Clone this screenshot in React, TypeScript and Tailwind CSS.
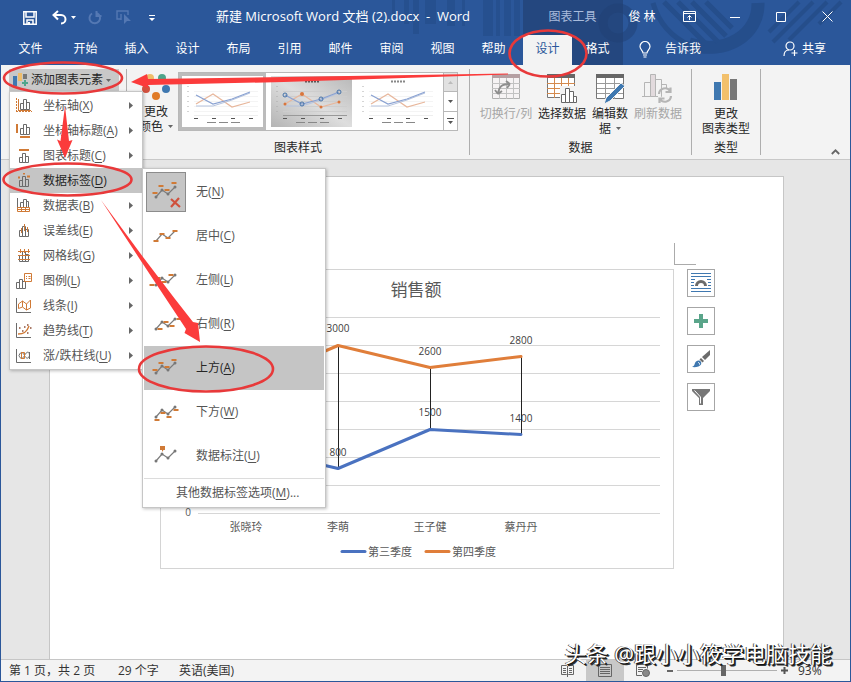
import React from "react";

const ORANGE = "#d07a36";
const GRAY = "#6b6b6b";

/* ---------- title bar ---------- */

function HeaderArt() {
  return (
    <svg className="absolute left-0 top-0 h-full w-[851px]" viewBox="0 0 851 65" aria-hidden="true">
      <g fill="#244c88" opacity="0.6">
        <rect x="391" y="0" width="3" height="14" />
        <rect x="403" y="0" width="5" height="24" />
        <rect x="412" y="0" width="6" height="34" />
        <rect x="424" y="0" width="11" height="24" />
        <rect x="446" y="0" width="8" height="26" />
        <rect x="461" y="0" width="3" height="26" />
        <rect x="482" y="0" width="10" height="36" />
        <rect x="495" y="0" width="4" height="36" />
        <rect x="503" y="0" width="7" height="36" />
        <rect x="513" y="0" width="6" height="36" />
      </g>
      <rect x="522" y="0" width="100" height="65" fill="#24477f" />
      <circle cx="617" cy="23" r="15" fill="none" stroke="#1f3f73" strokeWidth="9" opacity="0.5" />
      <g fill="none" stroke="#244c88" opacity="0.8">
        <path d="M688 44C725 56 758 34 757 3" strokeWidth="13" />
        <path d="M652 3C658 24 672 38 690 46" strokeWidth="5" />
        <path d="M663 2l42 42M677 2l40 40M691 2l34 34M705 2l26 26" strokeWidth="5" />
        <path d="M812 2l-40 40M826 2l-38 38M840 2l-22 22M798 2l-30 30" strokeWidth="4" />
      </g>
    </svg>
  );
}

function SaveIcon() {
  return (
    <svg width="14" height="14" viewBox="0 0 14 14" fill="none" stroke="#fff" strokeWidth="1.5">
      <path d="M.8.8h12.4v12.4H.8zM3 1v5h8V1" />
      <path d="M4 13V9h6v4" />
      <path d="M5 11h2v2H5z" fill="#fff" stroke="none" />
    </svg>
  );
}

function UndoIcon() {
  return (
    <svg width="15" height="15" viewBox="0 0 15 15" fill="none" stroke="#fff" strokeWidth="2">
      <path d="M6 1L1.500 5L6 9.500M2 5h7c6 0 6 8.500 0 8.500" />
    </svg>
  );
}

function RedoIcon() {
  return (
    <svg width="14" height="14" viewBox="0 0 14 14" fill="none" stroke="#5478b3" strokeWidth="2">
      <path d="M9 2.200A5.300 5.300 0 1 1 4 2.500M8.500 0v5h5" />
    </svg>
  );
}

function TouchIcon() {
  return (
    <svg width="16" height="15" viewBox="0 0 16 15" fill="none" stroke="#5478b3" strokeWidth="1.400">
      <path d="M5 9H1V1h11v4M5 4v6" />
      <path d="M8 4v10l3-3h4z" fill="#5478b3" stroke="none" />
    </svg>
  );
}

function Caret({ color = "#fff" }: { color?: string }) {
  return (
    <svg width="5" height="3" viewBox="0 0 5 3" fill={color} className="shrink-0">
      <path d="M0 0h5L2.500 3z" />
    </svg>
  );
}

function TitleBar() {
  return (
    <div className="relative flex h-[35px] items-center pb-0.5">
      <div className="flex w-[522px] shrink-0 items-center">
        <div className="flex w-[162px] shrink-0 items-center pl-[22px] pt-0.5">
          <button aria-label="保存" className="w-[29px]"><SaveIcon /></button>
          <button aria-label="撤消" className="flex w-9 items-center gap-1"><UndoIcon /><Caret /></button>
          <button aria-label="恢复" className="w-7"><RedoIcon /></button>
          <button aria-label="触摸模式" className="w-[33px]"><TouchIcon /></button>
          <button aria-label="自定义">
            <svg width="6" height="6" viewBox="0 0 6 6" fill="#fff"><path d="M0 0h6v1H0zM0 3h6L3 6z" /></svg>
          </button>
        </div>
        <h1 className="flex-1 whitespace-pre text-center text-[13px] text-white">新建 Microsoft Word 文档 (2).docx  -  Word</h1>
      </div>
      <div className="w-[99px] shrink-0 text-center text-xs text-[#a9bcdc]">图表工具</div>
      <div className="ml-auto w-11 whitespace-nowrap pr-1 text-center text-xs text-white">俊 林</div>
      <button aria-label="功能区显示选项" className="flex w-[46px] justify-center">
        <svg width="13" height="11" viewBox="0 0 13 11" fill="none" stroke="#fff"><path d="M.5.500h12v10H.500zM.500 2.500h12M6.500 9V4.500M4.500 6.500l2-2l2 2" /></svg>
      </button>
      <button aria-label="最小化" className="flex w-[46px] justify-center">
        <svg width="10" height="10" viewBox="0 0 10 10" stroke="#fff"><path d="M0 5.500h10" /></svg>
      </button>
      <button aria-label="最大化" className="flex w-[46px] justify-center">
        <svg width="10" height="10" viewBox="0 0 10 10" fill="none" stroke="#fff"><path d="M.5.500h9v9h-9z" /></svg>
      </button>
      <button aria-label="关闭" className="flex w-[46px] justify-center">
        <svg width="11" height="11" viewBox="0 0 11 11" stroke="#fff"><path d="M.5.500l10 10M10.500.500l-10 10" /></svg>
      </button>
    </div>
  );
}

const TABS = ["开始", "插入", "设计", "布局", "引用", "邮件", "审阅", "视图", "帮助"];

function TabRow() {
  return (
    <nav className="relative flex h-[30px] items-stretch text-xs text-white">
      <button className="w-[59px] pb-0.5">文件</button>
      {TABS.map((t) => (
        <button key={t} className="w-[51px] pb-0.5">{t}</button>
      ))}
      <button className="ml-1 w-[49px] bg-[#f3f3f3] pb-0.5 text-[#2b579a]">设计</button>
      <button className="w-[51px] pb-0.5">格式</button>
      <button className="ml-4 flex items-center gap-[14px] pb-0.5">
        <svg width="12" height="17" viewBox="0 0 12 17" fill="none" stroke="#fff" strokeWidth="1.200">
          <path d="M4 12C4 9.500 1 8.500 1 5.500a5 5 0 0 1 10 0C11 8.500 8 9.500 8 12zM4 14h4M4.500 16h3" />
        </svg>
        告诉我
      </button>
      <button className="ml-auto mr-6 flex items-center gap-1 pb-0.5">
        <svg width="15" height="16" viewBox="0 0 15 16" fill="none" stroke="#fff" strokeWidth="1.200">
          <circle cx="7" cy="5" r="4" />
          <path d="M1 15c0-4 2-6 5-6M11.500 9v6M8.500 12h6" />
        </svg>
        共享
      </button>
    </nav>
  );
}

/* ---------- ribbon ---------- */

function AddElementIcon() {
  return (
    <svg width="16" height="16" viewBox="0 0 16 16">
      <path d="M1 4h4v10H1z" fill="#3f78b0" />
      <path d="M6 1h4v8H6z" fill="#efbd6b" />
      <path d="M11 2h4v5h-4z" fill="#777" />
      <path d="M10 10h2V8h2v2h2v2h-2v2h-2v-2h-2z" fill="#4ea58b" />
    </svg>
  );
}

function ColorDots() {
  return (
    <svg width="28" height="30" viewBox="0 0 28 30">
      <circle cx="8" cy="6" r="4" fill="#efbd6b" />
      <circle cx="20" cy="6" r="4" fill="#4ea58b" />
      <circle cx="4" cy="17" r="4" fill="#d2513f" />
      <circle cx="24" cy="17" r="4" fill="#3f78b0" />
      <circle cx="14" cy="24" r="4" fill="#e07b28" />
    </svg>
  );
}

function StyleThumb({ variant }: { variant: 0 | 1 | 2 }) {
  const shaded = variant === 1;
  return (
    <svg width="81" height="51" viewBox="0 0 81 51" className="block">
      {shaded && (
        <defs>
          <linearGradient id="thumbShade" x1="0" y1="1" x2="1" y2="0">
            <stop offset="0" stopColor="#b4b4b4" />
            <stop offset="0.5" stopColor="#dedede" />
            <stop offset="1" stopColor="#b8b8b8" />
          </linearGradient>
        </defs>
      )}
      <rect width="81" height="51" fill={shaded ? "url(#thumbShade)" : "#fff"} />
      <path d="M34 5.500h14" stroke={shaded ? "#555" : "#888"} strokeWidth="2" strokeDasharray="2 1" />
      <path d="M12 15.500h64M12 20.500h64M12 25.500h64M12 30.500h64M12 35.500h64" stroke={shaded ? "#cdcdcd" : "#f4f4f4"} />
      <path d="M6 10v28" stroke="#aaa" strokeDasharray="1 4" />
      <path d="M12 39.500h64" stroke={shaded ? "#999" : "#eee"} />
      <path d="M14 28L31 18L50 31L68 26" fill="none" stroke="#e8b79c" strokeWidth="1.200" />
      <path d="M14 30L31 30L50 24L68 17" fill="none" stroke="#b5c3de" />
      <path d="M14 19L31 28L50 23L68 16" fill="none" stroke="#8aa2d2" strokeWidth="1.200" />
      {shaded && (
        <g>
          <g fill="none" stroke="#4472a8"><circle cx="14" cy="19" r="2" /><circle cx="31" cy="28" r="2" /><circle cx="50" cy="23" r="2" /><circle cx="68" cy="16" r="2" /></g>
          <g fill="#d9753c"><circle cx="14" cy="28" r="1.500" /><circle cx="31" cy="18" r="2" /><circle cx="50" cy="31" r="1.500" /><circle cx="68" cy="26" r="1.500" /></g>
        </g>
      )}
      <path d="M12 42.500h4M30 42.500h4M49 42.500h4M67 42.500h4" stroke="#555" />
      <path d="M25 46.500h9M37 46.500h9M49 46.500h9" stroke="#888" />
    </svg>
  );
}

function SwitchIcon() {
  return (
    <svg width="30" height="26" viewBox="0 0 30 26" fill="none">
      <path d="M1.500.500h27v24h-27z" fill="#f6f3f4" stroke="#b0b0b0" />
      <path d="M1 9.500h28M1 14.500h28M1 19.500h28M8.500 4v21M15.500 4v21M22.500 4v21" stroke="#c2c2c2" />
      <path d="M1 0h28v4H1z" fill="#b5a0a3" />
      <path d="M7 20c1-8 4-10 12-10M7 20l-3-4M7 20l4-3M19 10l-4-3M19 10l-3 4" stroke="#8e8e8e" strokeWidth="1.800" />
    </svg>
  );
}

function SelectDataIcon() {
  return (
    <svg width="32" height="30" viewBox="0 0 32 30" fill="none">
      <path d="M1.500.500h27v23h-27z" fill="#fff" stroke="#777" />
      <path d="M1 9.500h28M1 14.500h28M1 19.500h28M8.500 4v20M15.500 4v20M22.500 4v20" stroke="#d48a4d" />
      <path d="M1 0h28v4H1z" fill="#666" />
      <path d="M14 12h18v18H14z" fill="#f3f3f3" />
      <path d="M15.500 20.500h4v8h-4zM19.500 14.500h4v14h-4zM23.500 17.500h4v11h-4zM27.500 22.500h3v6h-3z" fill="#fff" stroke="#666" />
    </svg>
  );
}

function EditDataIcon() {
  return (
    <svg width="30" height="30" viewBox="0 0 30 30" fill="none">
      <path d="M1.500.500h27v24h-27z" fill="#fff" stroke="#777" />
      <path d="M2 9.500h26M2 14.500h26M2 19.500h26M10.500 4v21M19.500 4v21" stroke="#999" />
      <path d="M1 0h28v4H1z" fill="#666" />
      <path d="M26 9l4 3L15 27l-6 3l2-6z" fill="#3f78b0" stroke="#f3f3f3" />
    </svg>
  );
}

function RefreshIcon() {
  return (
    <svg width="32" height="30" viewBox="0 0 32 30" fill="none" stroke="#b5b5b5">
      <path d="M2.500 22.500v-14h6v14zM13.500 22.500v-17h6v17M19.500 22.500v-12h5v4M0 22.500h16" />
      <path d="M8.500.500h5v22h-5z" fill="#e2dadd" />
      <path d="M17 20a6 6 0 0 1 11-3M29 22a6 6 0 0 1-11 3M28.500 13.500v4.500h-5M17.500 29v-4.500h5" strokeWidth="2.200" />
    </svg>
  );
}

function ChartTypeIcon() {
  return (
    <svg width="24" height="27" viewBox="0 0 24 27">
      <path d="M0 8h7v18H0z" fill="#3f78b0" />
      <path d="M8 0h7v26H8z" fill="#f2c06c" />
      <path d="M16 5h7v21h-7z" fill="#777" />
    </svg>
  );
}

function BigButton({ icon, lines, caret, dim, width }: { icon: React.ReactNode; lines: string[]; caret?: boolean; dim?: boolean; width: string }) {
  return (
    <button className={`flex ${width} shrink-0 flex-col items-center whitespace-nowrap text-xs leading-[15px] ${dim ? "text-[#a6a6a6]" : "text-[#262626]"}`}>
      <span className="flex h-8 items-start">{icon}</span>
      {lines.map((l, i) => (
        <span key={l} className="flex items-center gap-[5px]">
          {l}
          {caret && i === lines.length - 1 && <Caret color="#666" />}
        </span>
      ))}
    </button>
  );
}

function Group({ width, label, children }: { width: string; label?: string; children: React.ReactNode }) {
  return (
    <section className={`relative mt-1 flex h-[86px] shrink-0 flex-col border-r border-[#aeaeae] ${width}`}>
      <div className="flex flex-1 items-start">{children}</div>
      {label && <div className="h-[14px] text-center text-xs leading-[14px] text-[#262626]">{label}</div>}
    </section>
  );
}

function Ribbon() {
  return (
    <div className="flex h-[95px] border-b border-[#c8c8c8] bg-[#f3f3f3]">
      <Group width="w-[126px]">
        <div className="relative ml-2">
          <button className="flex h-[22px] w-[110px] items-center gap-[3px] whitespace-nowrap bg-[#c8c8c8] pl-[3px] text-xs text-[#262626]">
            <AddElementIcon />
            添加图表元素
            <Caret color="#666" />
          </button>
          <ElementMenu />
        </div>
      </Group>
      <Group width="w-[343px]" label="图表样式">
        <div className="flex pt-[3px]">
          <BigButton icon={<ColorDots />} lines={["更改", "颜色"]} caret width="w-[51px] pl-[7px]" />
          <div className="flex h-[59px] border border-[#b8b8b8] bg-white">
            <button aria-label="样式 1" className="border-[3px] border-[#bcbcbc]"><StyleThumb variant={0} /></button>
            <button aria-label="样式 2" className="px-[5px] py-[3px]"><StyleThumb variant={1} /></button>
            <button aria-label="样式 3" className="py-[3px] pl-0 pr-[5px]"><StyleThumb variant={2} /></button>
            <div className="flex w-[14px] flex-col divide-y divide-[#b8b8b8] border-l border-[#b8b8b8]">
              <button aria-label="上一行" className="flex flex-1 items-center justify-center bg-[#e1e1e1]">
                <svg width="5" height="3" viewBox="0 0 5 3" fill="#bbb"><path d="M0 3h5L2.500 0z" /></svg>
              </button>
              <button aria-label="下一行" className="flex flex-1 items-center justify-center"><Caret color="#555" /></button>
              <button aria-label="其他" className="flex flex-1 items-center justify-center">
                <svg width="7" height="6" viewBox="0 0 7 6" fill="#555"><path d="M0 0h7v1H0zM1 3h5L3.500 6z" /></svg>
              </button>
            </div>
          </div>
        </div>
      </Group>
      <Group width="w-[222px]" label="数据">
        <div className="flex pl-2 pt-[5px]">
          <BigButton icon={<SwitchIcon />} lines={["切换行/列"]} dim width="w-14" />
          <BigButton icon={<SelectDataIcon />} lines={["选择数据"]} width="w-14" />
          <BigButton icon={<EditDataIcon />} lines={["编辑数", "据"]} caret width="w-10" />
          <BigButton icon={<RefreshIcon />} lines={["刷新数据"]} dim width="w-14" />
        </div>
      </Group>
      <Group width="w-[69px]" label="类型">
        <div className="flex pl-[6px] pt-[5px]">
          <BigButton icon={<ChartTypeIcon />} lines={["更改", "图表类型"]} width="w-14" />
        </div>
      </Group>
      <button aria-label="折叠功能区" className="mb-1 ml-auto mr-[10px] self-end">
        <svg width="9" height="6" viewBox="0 0 9 6" fill="none" stroke="#666" strokeWidth="1.800"><path d="M.8 5L4.500 1.300L8.200 5" /></svg>
      </button>
    </div>
  );
}

/* ---------- menus ---------- */

const BARS = "M3.500 7.500h3v6h-3zM6.500 3.500h3v10h-3zM9.500 6.500h3v7h-3z";

const ELEMENT_ICONS: Record<string, React.ReactNode> = {
  axis: (<><path d="M4.500 5.500h3v6h-3zM7.500 1.500h3v10h-3zM10.500 4.500h3v7h-3z" stroke={GRAY} /><path d="M.5 0v13M0 13.500H16" stroke={ORANGE} strokeDasharray="2 1" /><path d="M2.500 1v11M2 12.500h13" stroke={ORANGE} /></>),
  axisTitle: (<><path d="M4.500 5.500h3v6h-3zM7.500 1.500h3v10h-3zM10.500 4.500h3v7h-3z" stroke={GRAY} /><path d="M1 1v9M4 14h10" stroke={ORANGE} strokeWidth="2" /></>),
  chartTitle: (<><path d="M3.500 9.500h3v5h-3zM6.500 5.500h3v9h-3zM9.500 8.500h3v6h-3z" stroke={GRAY} /><path d="M3 2h10" stroke={ORANGE} strokeWidth="2" /></>),
  labels: (<><path d={BARS} stroke={GRAY} /><path d="M2 4.500h2M7 .5h2M11 3.500h3" stroke={ORANGE} strokeWidth="2" /></>),
  table: (<><path d="M1.500 0v10M4.500 4.500h3v5h-3zM7.500 1.500h3v8h-3zM10.500 3.500h2v6h-2z" stroke={GRAY} /><path d="M1.500 9.500h12v4h-12zM1.500 11.500h12M5.500 9v5M9.500 9v5" stroke={ORANGE} /></>),
  error: (<><path d={BARS} stroke={GRAY} /><path d="M5.500 5v5M8.500 1v7M11.500 4v5" stroke={ORANGE} /></>),
  grid: (<><path d={BARS} stroke={GRAY} /><path d="M2 3.500h12M2 7.500h12M2 11.500h12M4.500 1v4M8.500 1v4M12.500 1v4" stroke={ORANGE} /></>),
  legend: (<><path d="M.5 9.500h3v6h-3zM3.500 6.500h3v9h-3zM6.500 8.500h3v7h-3z" stroke={GRAY} /><path d="M8.500.500h7v8h-7zM10 3.500h1M12.500 3.500h2M10 5.500h1M12.500 5.500h2" stroke={ORANGE} /></>),
  lines: (<><path d="M.5 0v14.500H15" stroke={GRAY} /><path d="M2.500 10.500V6l4-3l4 3l4-4v8l-4 2l-4-3zM6.500 3v6M10.500 6v6" stroke={ORANGE} /></>),
  trend: (<><path d="M.5 0v14.500H15" stroke={GRAY} /><path d="M2 11c6 0 9-2 11-8" stroke={ORANGE} strokeWidth="1.400" /><path d="M3 5h1.500M6 8h1.500M8 4h1.500M11 2h1.500M11 10h1.500M14 5h1.500" stroke="#8d4d36" strokeWidth="1.500" /></>),
  updown: (<><path d="M.5 1v13.500H15M3 7.500c2-5 4-3 5.500 0s4 4 5 0c0-5-3-4-5 0s-4 4-5.500 0zM13.500 4v7" stroke={GRAY} /><path d="M5.500 4.500h3v6h-3z" stroke={ORANGE} /></>),
};

const ELEMENT_ITEMS: [string, string, string][] = [
  ["axis", "坐标轴", "X"],
  ["axisTitle", "坐标轴标题", "A"],
  ["chartTitle", "图表标题", "C"],
  ["labels", "数据标签", "D"],
  ["table", "数据表", "B"],
  ["error", "误差线", "E"],
  ["grid", "网格线", "G"],
  ["legend", "图例", "L"],
  ["lines", "线条", "I"],
  ["trend", "趋势线", "T"],
  ["updown", "涨/跌柱线", "U"],
];

function Accel({ text, k, tail }: { text: string; k: string; tail?: string }) {
  return (
    <span className="whitespace-nowrap">
      {text}(<span className="underline underline-offset-2">{k}</span>){tail}
    </span>
  );
}

function ElementMenu() {
  return (
    <div role="menu" className="absolute left-0 top-[22px] z-20 w-[134px] border border-[#c6c6c6] bg-white py-px shadow-[1px_1px_3px_rgba(0,0,0,0.25)]">
      {ELEMENT_ITEMS.map(([id, text, k]) => (
        <button
          key={id}
          role="menuitem"
          className={`flex h-[25px] w-full items-center pl-[6px] pr-[9px] text-xs ${id === "labels" ? "bg-[#c5c5c5] text-[#262626]" : "text-[#555]"}`}
        >
          <svg width="16" height="16" viewBox="0 0 16 16" fill="none" className="mr-[11px] shrink-0">{ELEMENT_ICONS[id]}</svg>
          <Accel text={text} k={k} />
          {id !== "labels" && (
            <svg width="4" height="7" viewBox="0 0 4 7" fill="#666" className="ml-auto shrink-0"><path d="M0 0v7l4-3.500z" /></svg>
          )}
        </button>
      ))}
      <LabelMenu />
    </div>
  );
}

const NODES: [number, number][] = [[5, 17], [11, 10], [17, 14], [24, 7]];

function LabelIcon({ dx, dy, kind }: { dx: number; dy: number; kind: string }) {
  return (
    <svg width="30" height="24" viewBox="0 0 30 24" fill="none">
      <path d="M5 17L11 10L17 14L24 7" stroke="#7b7b7b" strokeWidth="1.200" />
      {kind !== "center" && NODES.map(([x, y]) => <circle key={x} cx={x} cy={y} r="1.500" fill="#777" />)}
      {kind === "callout" ? (
        <path d="M9 2h5v4h-1.500l-1.500 2V6h-2z" fill={ORANGE} />
      ) : (
        NODES.map(([x, y]) => <rect key={x} x={x + dx - 2.5} y={y + dy - 1} width="5" height="2" fill={ORANGE} />)
      )}
      {kind === "none" && <path d="M20 19l9 8M28 18l-8 9" stroke="#cf513d" strokeWidth="2.200" />}
    </svg>
  );
}

const LABEL_ITEMS: { text: string; k: string; kind: string; dx: number; dy: number }[] = [
  { text: "无", k: "N", kind: "none", dx: -1, dy: -4 },
  { text: "居中", k: "C", kind: "center", dx: 0, dy: 0 },
  { text: "左侧", k: "L", kind: "left", dx: -4, dy: 0 },
  { text: "右侧", k: "R", kind: "right", dx: 4, dy: 0 },
  { text: "上方", k: "A", kind: "above", dx: -1, dy: -3 },
  { text: "下方", k: "W", kind: "below", dx: 1, dy: 3 },
  { text: "数据标注", k: "U", kind: "callout", dx: 0, dy: 0 },
];

function LabelMenu() {
  return (
    <div role="menu" className="absolute left-[132px] top-[76px] w-[184px] border border-[#c6c6c6] bg-white p-px shadow-[1px_1px_3px_rgba(0,0,0,0.25)]">
      {LABEL_ITEMS.map((it) => (
        <button
          key={it.k}
          role="menuitem"
          className={`flex h-11 w-full items-center pl-[2px] text-xs ${it.k === "A" ? "bg-[#c5c5c5] text-[#262626]" : "text-[#555]"}`}
        >
          <span className={`mr-[10px] flex size-10 shrink-0 items-center justify-center border [&>svg]:overflow-visible ${it.k === "N" ? "border-[#8c8c8c] bg-[#c5c5c5]" : "border-transparent"}`}>
            <LabelIcon dx={it.dx} dy={it.dy} kind={it.kind} />
          </span>
          <Accel text={it.text} k={it.k} />
        </button>
      ))}
      <button role="menuitem" className="flex h-7 w-full items-center border-t border-[#dcdcdc] pl-8 text-xs text-[#555]">
        <Accel text="其他数据标签选项" k="M" tail="..." />
      </button>
    </div>
  );
}

/* ---------- document ---------- */

const CATEGORIES: [string, number][] = [["张晓玲", 86], ["李萌", 178], ["王子健", 270], ["蔡丹丹", 361]];
const VALUES: [string, number, number][] = [
  ["3000", 178, 63], ["2600", 270, 86], ["2800", 361, 75],
  ["800", 178, 187], ["1500", 270, 147], ["1400", 361, 153],
];

function Chart() {
  return (
    <svg width="514" height="300" viewBox="0 0 514 300" className="shrink-0 bg-white outline outline-1 -outline-offset-1 outline-[#d4d4d4]">
      <path d="M38 48.500h462M38 76.500h462M38 104.500h462M38 132.500h462M38 160.500h462M38 188.500h462M38 216.500h462M38 244.500h462" stroke="#d6d6d6" />
      <path d="M178.500 76v123M270.500 98v63M361.500 87v78" stroke="#222" />
      <path d="M86 116L178 76.500L270 98.500L361 87.500" fill="none" stroke="#e07e3a" strokeWidth="3" strokeLinejoin="round" strokeLinecap="round" />
      <path d="M86 178L178 199.500L270 160.500L361 165.500" fill="none" stroke="#4a72c0" strokeWidth="3" strokeLinejoin="round" strokeLinecap="round" />
      <text x="256" y="27" textAnchor="middle" fontSize="17" fill="#595959">销售额</text>
      <g fontSize="10" fill="#404040" textAnchor="middle">
        {VALUES.map(([t, x, y]) => <text key={t} x={x} y={y}>{t}</text>)}
        <text x="28" y="247" fill="#595959">0</text>
      </g>
      <g fontSize="11" fill="#595959" textAnchor="middle">
        {CATEGORIES.map(([t, x]) => <text key={t} x={x} y="262">{t}</text>)}
      </g>
      <path d="M182 282.500h23" stroke="#4a72c0" strokeWidth="3" strokeLinecap="round" />
      <path d="M266 282.500h23" stroke="#e07e3a" strokeWidth="3" strokeLinecap="round" />
      <g fontSize="11" fill="#595959">
        <text x="208" y="287">第三季度</text>
        <text x="292" y="287">第四季度</text>
      </g>
    </svg>
  );
}

function SideButton({ label, children }: { label: string; children: React.ReactNode }) {
  return (
    <button aria-label={label} className="flex size-7 items-center justify-center border border-[#a6a6a6] bg-white">{children}</button>
  );
}

function DocumentArea() {
  return (
    <main className="flex-1 overflow-hidden bg-[#e6e6e6] pl-12 pr-[66px] pt-4">
      <div className="h-full border border-b-0 border-[#c6c6c6] bg-white pl-[110px] pt-[66px]">
        <div className="ml-[514px] size-[22px] border-b border-l border-[#ababab]" />
        <div className="mt-1 flex gap-[13px]">
          <Chart />
          <div className="flex flex-col gap-[10px]">
            <SideButton label="布局选项">
              <svg width="20" height="20" viewBox="0 0 20 20" fill="none">
                <path d="M0 .500h20M0 3.500h20M0 6.500h4M16 6.500h4M0 9.500h3M17 9.500h3M0 12.500h3M17 12.500h3M0 15.500h20M0 18.500h20" stroke="#3f78b0" />
                <path d="M5.500 13a4.500 4.500 0 0 1 9 0" stroke="#6b6b6b" strokeWidth="3" />
              </svg>
            </SideButton>
            <SideButton label="图表元素">
              <svg width="14" height="14" viewBox="0 0 14 14" fill="#5aa58a"><path d="M5 0h4v5h5v4H9v5H5V9H0V5h5z" /></svg>
            </SideButton>
            <SideButton label="图表样式">
              <svg width="18" height="18" viewBox="0 0 18 18">
                <path d="M18 0v5l-5 5l-3-3z" fill="#6b6b6b" />
                <path d="M9 8l3 3l-1.500 1.500L7.500 9.500z" fill="#6b6b6b" />
                <path d="M6.500 10.500c2 0 3.500 2 2.500 4c-1 2-5 3-9 2.500c2-1 2.500-2 3-4c.5-1.500 2-2.500 3.500-2.500z" fill="#3f78b0" />
                <path d="M6 12.500c1 0 2 1 1.500 2" fill="none" stroke="#fff" />
              </svg>
            </SideButton>
            <SideButton label="图表筛选器">
              <svg width="18" height="17" viewBox="0 0 18 17">
                <path d="M0 0h18v2l-7 7v7H7V9L0 2z" fill="#777" />
                <path d="M2.500 1.500l6 6.500v6.500" fill="none" stroke="#fff" />
              </svg>
            </SideButton>
          </div>
        </div>
      </div>
    </main>
  );
}

/* ---------- status bar ---------- */

function StatusBar() {
  return (
    <footer className="relative flex h-[22px] items-center border-t border-[#c6c6c6] bg-[#f3f3f3] pl-2 text-xs text-[#333]">
      <span className="w-[109px]">第 1 页，共 2 页</span>
      <span className="w-[61px]">29 个字</span>
      <span>英语(美国)</span>
      <div className="ml-auto flex h-full items-center">
        <button aria-label="阅读视图" className="flex w-[38px] justify-center">
          <svg width="13" height="13" viewBox="0 0 13 13" fill="none" stroke="#666"><path d="M.5 1.500h5l1 1l1-1h5v9h-5l-1 1l-1-1h-5zM6.500 2v11M2 4.500h3M2 6.500h3M2 8.500h3M8 4.500h3M8 6.500h3M8 8.500h3" /></svg>
        </button>
        <button aria-label="页面视图" className="flex h-full w-[38px] items-center justify-center bg-[#c8c8c8]">
          <svg width="14" height="13" viewBox="0 0 14 13" fill="none" stroke="#666"><path d="M.5.500h13v12H.500zM2 3.500h10M2 5.500h10M2 7.500h10M2 9.500h10" /></svg>
        </button>
        <button aria-label="Web 版式" className="flex w-[38px] justify-center">
          <svg width="14" height="13" viewBox="0 0 14 13" fill="none" stroke="#666"><path d="M6 11.500H.500V.500h11v4M2 3.500h8M2 5.500h5M2 7.500h4" /><circle cx="10" cy="9" r="3.500" fill="#888" /></svg>
        </button>
        <button aria-label="缩小" className="ml-[5px] w-[10px]"><svg width="6" height="10" viewBox="0 0 6 10"><path d="M0 4h6v2H0z" fill="#666" /></svg></button>
        <input
          type="range"
          aria-label="显示比例"
          min={0}
          max={100}
          defaultValue={46}
          className="h-3 w-[100px] appearance-none bg-[linear-gradient(#b0b0b0,#b0b0b0)] bg-[length:100%_1px] bg-center bg-no-repeat [&::-webkit-slider-thumb]:h-[11px] [&::-webkit-slider-thumb]:w-[5px] [&::-webkit-slider-thumb]:appearance-none [&::-webkit-slider-thumb]:bg-[#666]"
        />
        <button aria-label="放大" className="ml-1 w-4"><svg width="7" height="7" viewBox="0 0 7 7" fill="#555"><path d="M2.500 0h2v2.500H7v2H4.500V7h-2V4.500H0v-2h2.500z" /></svg></button>
        <span className="ml-px w-[52px]">93%</span>
      </div>
      <div className="pointer-events-none absolute bottom-[14px] right-[18px] whitespace-nowrap text-[22px] leading-7 text-white [text-shadow:1px_1px_0_#111,2px_2px_0_#333,-1px_0_0_#555]">
        头条 @跟小小筱学电脑技能
      </div>
    </footer>
  );
}

/* ---------- hand-drawn marks over the window ---------- */

function Marks() {
  return (
    <svg className="pointer-events-none absolute -left-px top-0 z-30" width="851" height="682" viewBox="0 0 851 682" aria-hidden="true">
      <g fill="none" stroke="#e8393a" strokeWidth="2.600">
        <ellipse cx="63" cy="78" rx="59" ry="15.500" />
        <ellipse cx="548" cy="53.500" rx="38.500" ry="23" />
        <ellipse cx="67.500" cy="179.500" rx="64" ry="16" />
        <ellipse cx="206" cy="369" rx="67" ry="22.500" />
      </g>
      <g fill="#fb3b3b">
        <path d="M508 73.500L284 77L148 79L147 74L131 82L148 88L148 85L284 82L508 74.500z" />
        <path d="M65 106L60.500 141L57 139.500L65 158L72.500 140L69 141z" />
        <path d="M101 200L139 258L186 329L184.500 333L200 342L198 323L193 322L175 299L143 257z" />
      </g>
    </svg>
  );
}

export default function App() {
  return (
    <div className="relative flex h-screen min-h-[640px] flex-col overflow-hidden border-x border-b border-[#2b579a] bg-[#2b579a] font-['Open_Sans','Noto_Sans_CJK_SC',sans-serif]">
      <header className="relative">
        <HeaderArt />
        <TitleBar />
        <TabRow />
      </header>
      <Ribbon />
      <DocumentArea />
      <StatusBar />
      <Marks />
    </div>
  );
}
